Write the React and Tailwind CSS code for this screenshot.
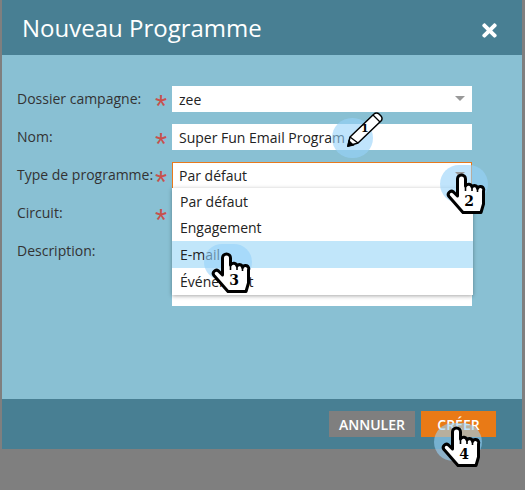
import React from 'react'
import { FaTimes } from 'react-icons/fa'

const Hand = ({ n, className }) => (
  <div className={`absolute w-[38px] h-[39px] ${className}`}>
    <svg viewBox="0 0 38 39" className="w-full h-full overflow-visible">
      <path
        d="M10.5 4 a4 4 0 0 1 8 0 V11 a3.5 3.5 0 0 1 6.5 1 a3 3 0 0 1 5.5 1.5 a3 3 0 0 1 6 2.5 V29 L34 37.5 H16 L2 21.5 a3.2 3.2 0 0 1 4.5 -4.5 L10.5 21 Z"
        fill="#fff"
        stroke="#000"
        strokeWidth="3"
        strokeLinejoin="round"
      />
      <path d="M18.5 11 V16 M25 12 V16 M30.5 14 V17" stroke="#000" strokeWidth="1.6" fill="none" />
    </svg>
    <span className="absolute left-[15px] top-[17px] w-[14px] text-center text-[14px] leading-[18px] font-bold text-black font-['DejaVu_Serif',serif]">{n}</span>
  </div>
)

const Bubble = ({ className }) => (
  <div className={`absolute rounded-full bg-[#96d2fa]/60 ${className}`}></div>
)

const Star = () => (
  <span className="w-[17px] shrink-0 h-[26px] pt-[8px] text-[31px] leading-[26px] text-[#c8504c] font-['Liberation_Sans',sans-serif]">*</span>
)

const Row = ({ label, children }) => (
  <div className="flex items-start">
    <label className="w-[138px] shrink-0 leading-[26px] whitespace-nowrap">{label}</label>
    {children}
  </div>
)

export default function App() {
  return (
    <div className="relative w-[525px] h-[490px] overflow-hidden bg-[#7f7f7f] text-[14px] text-[#333] font-['Open_Sans',sans-serif]">
      <div className="ml-[2px] w-[520px] h-[449px] flex flex-col bg-[#89c0d3]">
        <div className="h-[55px] shrink-0 bg-[#487f93] flex items-center justify-between pl-[20px] pr-[22px] text-white">
          <h1 className="text-[24px] leading-[32px]">Nouveau Programme</h1>
          <FaTimes className="text-[21px] mt-[5px]" />
        </div>

        <div className="flex-1 pt-[31px] pl-[15px] flex flex-col gap-[12px]">
          <Row label="Dossier campagne:">
            <Star />
            <div className="w-[300px] h-[26px] bg-white pl-[7px] pr-[7px] flex items-center justify-between text-[#222]">
              zee
              <span className="w-0 h-0 border-x-[5px] border-t-[5px] border-x-transparent border-t-[#999] -mt-[2px]"></span>
            </div>
          </Row>
          <Row label="Nom:">
            <Star />
            <div className="w-[300px] h-[26px] bg-white pl-[7px] flex items-center text-[#222]">Super Fun Email Program</div>
          </Row>
          <Row label="Type de programme:">
            <Star />
            <div className="w-[300px] h-[26px] bg-white border-t border-l border-r border-[#e8791c] pl-[6px] flex items-center text-[#222]">Par défaut</div>
          </Row>
          <Row label="Circuit:">
            <Star />
            <div className="w-[300px] h-[26px] bg-white"></div>
          </Row>
          <Row label="Description:">
            <span className="w-[17px] shrink-0"></span>
            <div className="w-[300px] h-[68px] bg-white"></div>
          </Row>
        </div>

        <div className="h-[50px] shrink-0 bg-[#487f93] flex justify-end items-center gap-[6px] pr-[26px] text-white font-semibold">
          <button className="w-[86px] h-[26px] bg-[#7f7f7f]">ANNULER</button>
          <button className="w-[75px] h-[26px] bg-[#e97a16]">CRÉER</button>
        </div>
      </div>

      {/* dropdown menu */}
      <ul className="absolute left-[172px] top-[188px] w-[301px] bg-white text-[#222] shadow-[0_1px_4px_rgba(0,0,0,0.35)]">
        <li className="h-[26px] pl-[8px] flex items-center">Par défaut</li>
        <li className="h-[27px] pl-[8px] flex items-center">Engagement</li>
        <li className="h-[27px] pl-[8px] flex items-center bg-[#c1e6fa]">E-mail</li>
        <li className="h-[27px] pl-[8px] flex items-center">Événement</li>
      </ul>

      {/* numbered callouts */}
      <Bubble className="left-[332px] top-[118px] w-[41px] h-[40px]" />
      <svg viewBox="0 0 38 36" className="absolute left-[346px] top-[112px] w-[38px] h-[36px]">
        <path d="M2 34 L4 25 L28 2 a3.5 3.5 0 0 1 5 0 L35 4 a3.5 3.5 0 0 1 0 5 L12 31 Z" fill="#fff" stroke="#000" strokeWidth="1.5" strokeLinejoin="round" />
        <path d="M2 34 L3 29 L7 33 Z" fill="#000" stroke="#000" strokeWidth="1.5" />
        <path d="M4 25 L12 31 M27 3 L34 10" stroke="#000" strokeWidth="1.3" fill="none" />
      </svg>
      <span className="absolute left-[361px] top-[122px] text-[11px] leading-[14px] font-bold text-black font-['DejaVu_Serif',serif]">1</span>

      <Bubble className="left-[440px] top-[165px] w-[48px] h-[38px]" />
      <div className="absolute left-[455px] top-[172px] w-0 h-0 border-x-[5px] border-t-[5px] border-x-transparent border-t-[#999]"></div>
      <Hand n="2" className="left-[447px] top-[175px]" />

      <Bubble className="left-[204px] top-[244px] w-[48px] h-[36px]" />
      <Hand n="3" className="left-[212px] top-[254px]" />

      <Bubble className="left-[434px] top-[423px] w-[48px] h-[38px]" />
      <Hand n="4" className="left-[442px] top-[428px]" />
    </div>
  )
}
